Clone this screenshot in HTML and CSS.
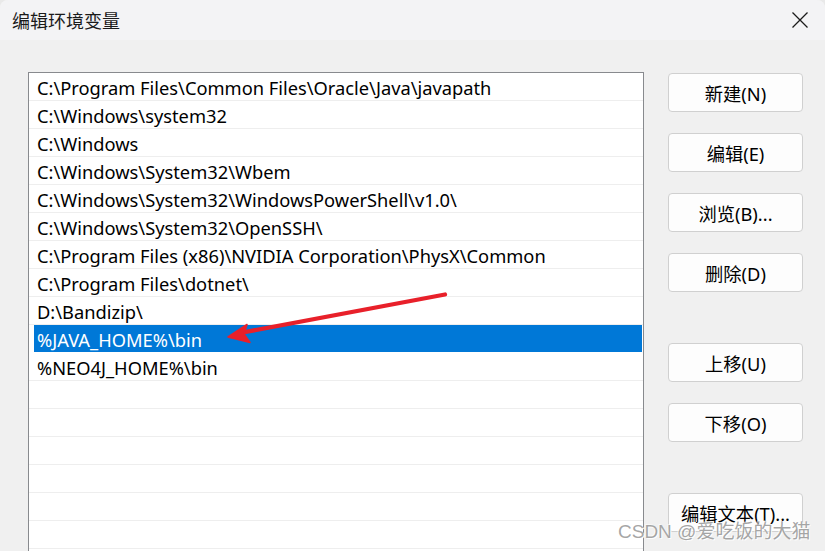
FILE: index.html
```html
<!DOCTYPE html>
<html lang="zh-CN">
<head>
<meta charset="utf-8">
<title>编辑环境变量</title>
<link rel="stylesheet" href="styles.css">
</head>
<body>
<div class="window">
  <div class="titlebar">
    <span class="title">编辑环境变量</span>
    <span class="close">
      <svg width="16" height="16" viewBox="0 0 16 16"><path d="M0.5 0.5 L15.5 15.5 M15.5 0.5 L0.5 15.5" stroke="#1a1a1a" stroke-width="1.3" fill="none"/></svg>
    </span>
  </div>
  <div class="content">
    <div class="list">
      <div class="row"><span>C:\Program Files\Common Files\Oracle\Java\javapath</span></div>
      <div class="row"><span>C:\Windows\system32</span></div>
      <div class="row"><span>C:\Windows</span></div>
      <div class="row"><span>C:\Windows\System32\Wbem</span></div>
      <div class="row"><span>C:\Windows\System32\WindowsPowerShell\v1.0\</span></div>
      <div class="row"><span>C:\Windows\System32\OpenSSH\</span></div>
      <div class="row"><span>C:\Program Files (x86)\NVIDIA Corporation\PhysX\Common</span></div>
      <div class="row"><span>C:\Program Files\dotnet\</span></div>
      <div class="row"><span>D:\Bandizip\</span></div>
      <div class="row selected"><span>%JAVA_HOME%\bin</span></div>
      <div class="row"><span>%NEO4J_HOME%\bin</span></div>
      <div class="row"></div>
      <div class="row"></div>
      <div class="row"></div>
      <div class="row"></div>
      <div class="row"></div>
      <div class="row"></div>
      <div class="row"></div>
    </div>
    <div class="buttons">
      <div class="group">
        <button class="btn">新建(N)</button>
        <button class="btn">编辑(E)</button>
        <button class="btn">浏览(B)...</button>
        <button class="btn">删除(D)</button>
      </div>
      <div class="group">
        <button class="btn">上移(U)</button>
        <button class="btn">下移(O)</button>
      </div>
      <div class="group">
        <button class="btn">编辑文本(T)...</button>
      </div>
    </div>
  </div>
  <svg class="arrow" width="825" height="551" viewBox="0 0 825 551">
    <path d="M445 294.5 L240 333" stroke="#e8202a" stroke-width="4.2" stroke-linecap="round" fill="none"/>
    <path d="M228 337 L247 324.5 L244 334 L250 342.5 Z" fill="#e8202a" stroke="#e8202a" stroke-width="1.5" stroke-linejoin="round"/>
  </svg>
  <div class="watermark">CSDN @爱吃饭的大猫</div>
</div>
</body>
</html>
```

FILE: styles.css
```css
html, body {
  margin: 0;
  padding: 0;
  background: #e9e9e9;
}
body {
  width: 825px;
  height: 551px;
  overflow: hidden;
  font-family: "Noto Sans", "Noto Sans CJK SC", sans-serif;
  color: #000;
}
.window {
  position: relative;
  width: 825px;
  height: 551px;
  background: #f0f0f0;
  border-radius: 8px 8px 0 0;
  overflow: hidden;
}
.titlebar {
  height: 40px;
  background: #f3f3f5;
  display: flex;
  align-items: center;
  justify-content: space-between;
  padding: 0 17px 0 12px;
  box-sizing: border-box;
}
.title {
  font-family: "Noto Sans CJK SC", sans-serif;
  font-size: 18px;
  line-height: 20px;
  color: #1a1a1a;
  margin-top: -1px;
}
.close {
  display: flex;
  margin-top: -1px;
}
.content {
  display: flex;
  padding: 32px 0 0 28px;
}
.list {
  width: 614px;
  height: 600px;
  border: 1px solid #888a8e;
  border-bottom: none;
  background: #fff;
  flex: none;
}
.row {
  height: 27px;
  border-bottom: 1px solid #eeeeee;
  display: flex;
  align-items: center;
  padding-left: 8px;
  font-size: 18.3px;
  letter-spacing: 0;
  white-space: nowrap;
}
.row span {
  margin-top: 2px;
}
.row.selected {
  background: #0078d7;
  color: #fff;
  margin: 0 1px 0 5px;
  padding-left: 3px;
  border-bottom-color: #fff;
}
.buttons {
  margin-left: 24px;
  padding-top: 1px;
  display: flex;
  flex-direction: column;
  gap: 51px;
}
.group {
  display: flex;
  flex-direction: column;
  gap: 21px;
}
.btn {
  width: 135px;
  height: 39px;
  border: 1px solid #d0d0d0;
  border-radius: 4px;
  background: #fdfdfd;
  font-family: "Noto Sans", "Noto Sans CJK SC", sans-serif;
  font-size: 18.3px;
  color: #000;
  padding: 0;
  margin: 0;
}
.arrow {
  position: absolute;
  left: 0;
  top: 0;
  pointer-events: none;
}
.watermark {
  position: absolute;
  left: 618px;
  top: 520px;
  font-family: "Liberation Sans", "Noto Sans CJK SC", sans-serif;
  font-size: 19px;
  line-height: 24px;
  color: rgba(150, 150, 150, 0.85);
  text-shadow: 1px 1px 0 rgba(255,255,255,0.9), -1px -1px 0 rgba(255,255,255,0.6);
}
```
